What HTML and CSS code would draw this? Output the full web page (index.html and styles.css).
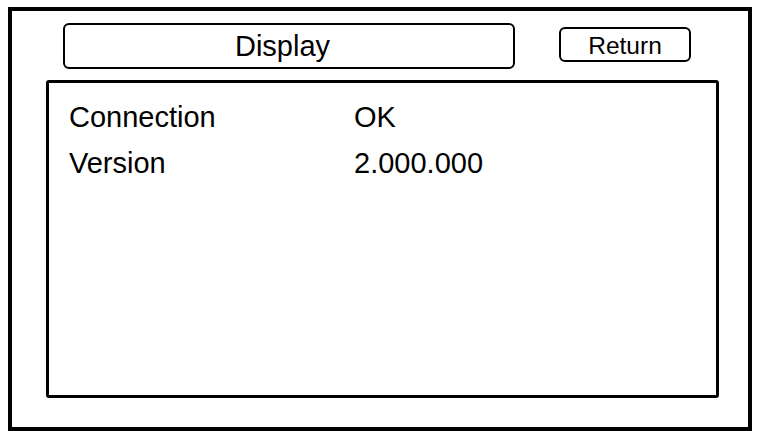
FILE: index.html
```html
<!DOCTYPE html>
<html>
<head>
<meta charset="utf-8">
<link rel="stylesheet" href="styles.css">
</head>
<body>
<div class="frame">
  <div class="header">
    <div class="title">Display</div>
    <div class="return">Return</div>
  </div>
  <div class="panel">
    <div class="row"><span class="label">Connection</span><span class="value">OK</span></div>
    <div class="row"><span class="label">Version</span><span class="value">2.000.000</span></div>
  </div>
</div>
</body>
</html>
```
FILE: styles.css
```css
html, body {
  margin: 0;
  padding: 0;
  background: #fff;
}
body {
  font-family: "Liberation Sans", Arial, sans-serif;
  color: #000;
}
.frame {
  box-sizing: border-box;
  margin: 7px 0 0 8px;
  width: 744px;
  height: 424px;
  border: 4px solid #000;
  padding: 12px 29px 0 34px;
  display: flex;
  flex-direction: column;
  gap: 11px;
}
.header {
  display: flex;
  align-items: flex-start;
  margin-left: 17px;
  gap: 44px;
}
.title {
  box-sizing: border-box;
  width: 452px;
  height: 46px;
  border: 2px solid #000;
  border-radius: 6px;
  font-size: 29px;
  padding: 1px 13px 0 0;
  display: flex;
  align-items: center;
  justify-content: center;
}
.return {
  box-sizing: border-box;
  width: 132px;
  height: 35px;
  margin-top: 4px;
  padding-top: 3px;
  border: 2px solid #000;
  border-radius: 6px;
  font-size: 24.5px;
  display: flex;
  align-items: center;
  justify-content: center;
}
.panel {
  box-sizing: border-box;
  width: 673px;
  height: 318px;
  border: 3px solid #000;
  border-radius: 3px;
  padding: 11px 0 0 20px;
}
.row {
  display: flex;
  font-size: 29px;
  line-height: 46px;
}
.label {
  width: 285px;
}
```
